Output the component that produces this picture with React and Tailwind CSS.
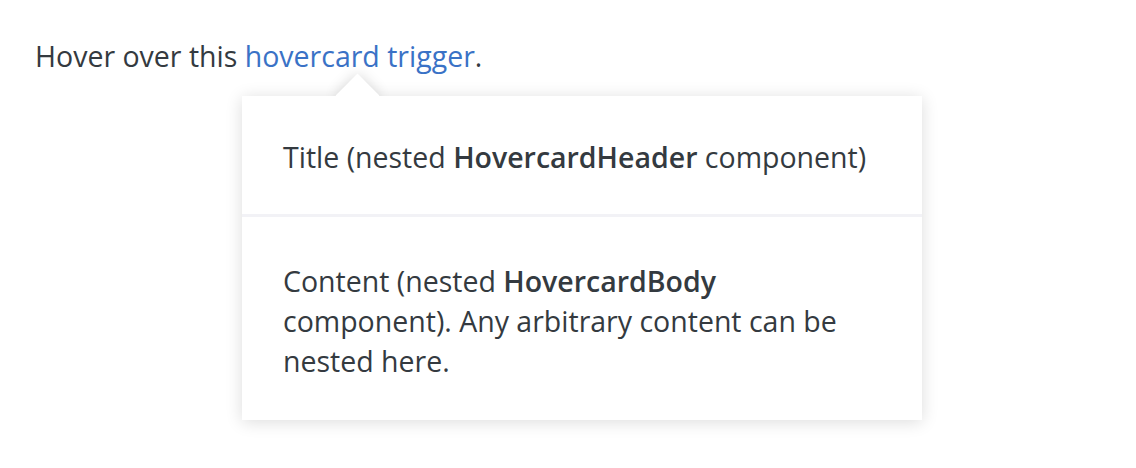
import React from "react";

export default function App() {
  return (
    <div
      className="w-[1136px] h-[468px] bg-white text-[#343a40]"
      style={{ fontFamily: '"Open Sans", "Noto Sans", sans-serif' }}
    >
      <div className="pl-[35px] pt-[36px] text-[28.5px] leading-[40px]">
        <div className="relative inline-block">
          Hover over this{" "}
          <span className="text-[#3a72c6]">hovercard trigger</span>.
          <div className="absolute left-[207px] top-[60px] w-[680px]">
            <div className="absolute left-[76px] -top-[32px] w-[80px] h-[32px] overflow-hidden">
              <div className="absolute left-[24px] top-[16px] w-[31px] h-[31px] rotate-45 bg-white shadow-[0_0_14px_rgba(0,0,0,0.16)]" />
            </div>
            <div className="flex flex-col bg-white shadow-[0_2px_16px_rgba(0,0,0,0.14)]">
              <div className="px-[41px] pt-[41px] pb-[37px] border-b-[3px] border-[#f2f2f6]">
                Title (nested <b className="font-semibold">HovercardHeader</b> component)
              </div>
              <div className="px-[41px] pt-[44px] pb-[39px]">
                Content (nested <b className="font-semibold">HovercardBody</b> component). Any arbitrary content can be nested here.
              </div>
            </div>
          </div>
        </div>
      </div>
    </div>
  );
}
